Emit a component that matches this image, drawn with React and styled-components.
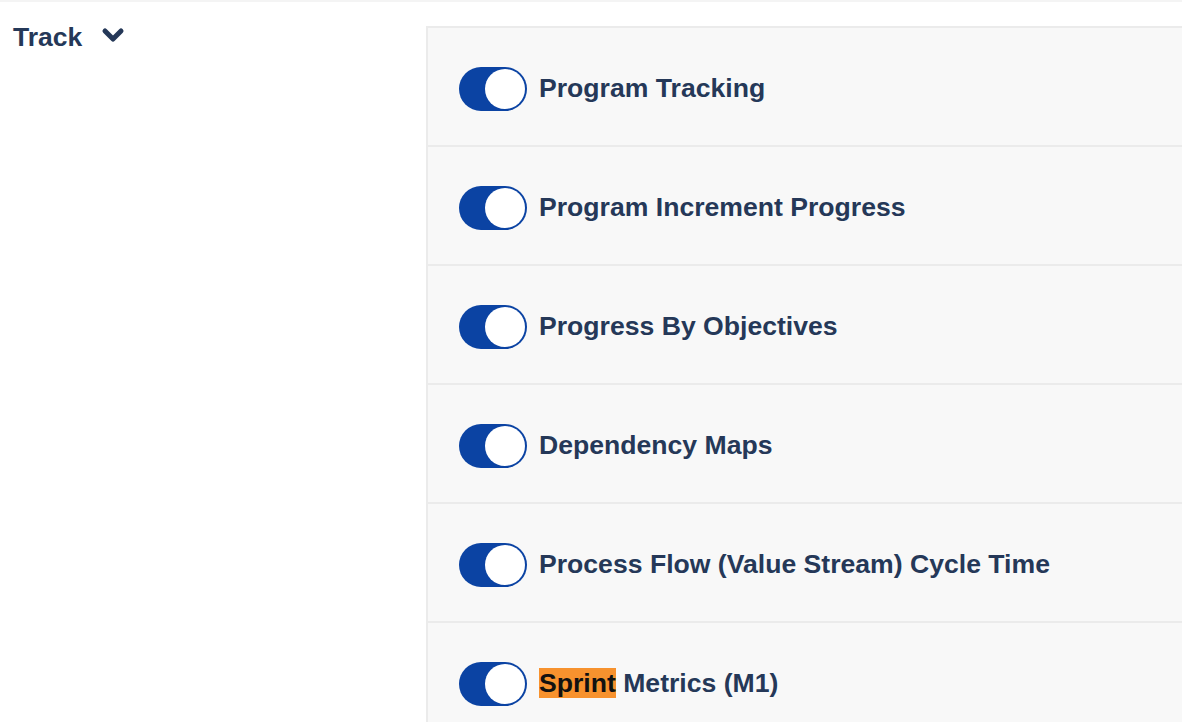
import React from 'react';
import styled, { createGlobalStyle } from 'styled-components';

const GlobalStyle = createGlobalStyle`
  body {
    margin: 0;
    background: #fff;
    font-family: "Liberation Sans", Arial, sans-serif;
  }
`;

const items = [
  { label: 'Program Tracking' },
  { label: 'Program Increment Progress' },
  { label: 'Progress By Objectives' },
  { label: 'Dependency Maps' },
  { label: 'Process Flow (Value Stream) Cycle Time' },
  { label: 'Metrics (M1)', mark: 'Sprint' },
];

const Chevron = () => (
  <svg width='24' height='16' viewBox='0 0 24 16'>
    <polyline
      points='4,4 12,12 20,4'
      fill='none'
      stroke='#253858'
      strokeWidth='5'
      strokeLinecap='round'
      strokeLinejoin='round'
    />
  </svg>
);

const App = () => {
  return (
    <Page>
      <GlobalStyle />
      <Side>
        <Heading>
          Track <Chevron />
        </Heading>
      </Side>
      <Panel>
        {items.map((item) => (
          <Row key={item.label}>
            <Toggle $on>
              <span className='knob' />
            </Toggle>
            <Label>
              {item.mark && <Mark>{item.mark}</Mark>}
              {item.mark ? ' ' : ''}
              {item.label}
            </Label>
          </Row>
        ))}
      </Panel>
    </Page>
  );
};

const Page = styled.div`
  display: grid;
  grid-template-columns: 426px 1fr;
  height: 722px;
  overflow: hidden;
  border-top: 2px solid #f4f4f4;
  box-sizing: border-box;
`;

const Side = styled.div`
  padding: 20px 0 0 13px;
`;

const Heading = styled.div`
  display: flex;
  align-items: center;
  gap: 19px;
  font-size: 26.5px;
  line-height: 30px;
  font-weight: 700;
  color: #253858;
  svg {
    margin-top: -4px;
  }
`;

const Panel = styled.div`
  padding-top: 24px;
  display: flex;
  flex-direction: column;
`;

const Row = styled.div`
  flex: 0 0 119px;
  box-sizing: border-box;
  display: flex;
  align-items: center;
  gap: 12px;
  padding: 4px 0 0 31px;
  background: #f8f8f8;
  border-top: 2px solid #ebebeb;
  border-left: 2px solid #ebebeb;
`;

const Toggle = styled.div`
  position: relative;
  width: 68px;
  height: 44px;
  border-radius: 22px;
  background: ${(p) => (p.$on ? '#0b43a3' : '#c1c7d0')};
  flex-shrink: 0;
  .knob {
    position: absolute;
    top: 2px;
    right: 2px;
    width: 40px;
    height: 40px;
    border-radius: 50%;
    background: #fff;
  }
`;

const Label = styled.span`
  font-size: 26.6px;
  font-weight: 700;
  color: #253858;
  white-space: nowrap;
`;

const Mark = styled.span`
  background: #f7922e;
  color: #111;
`;

export default App;
